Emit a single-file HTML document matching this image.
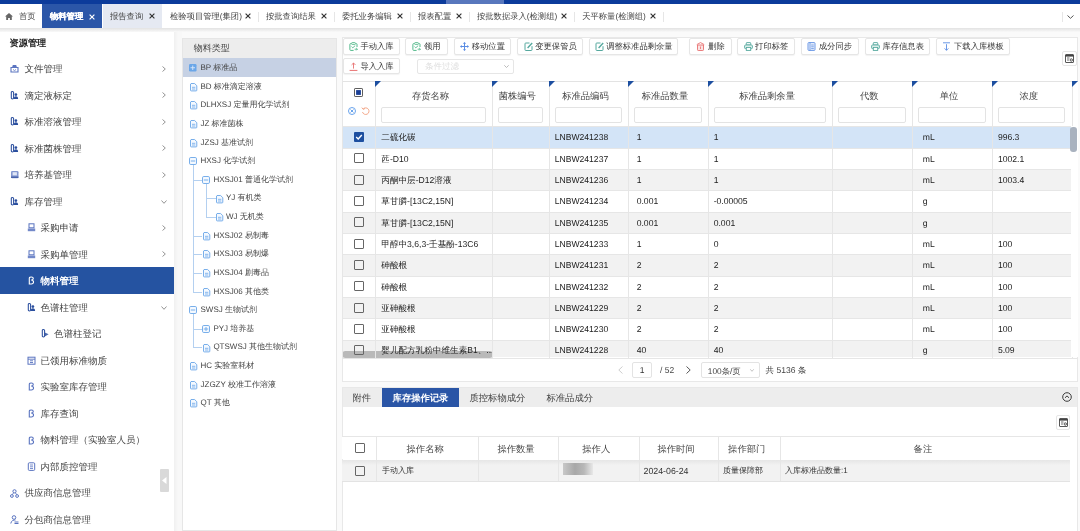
<!DOCTYPE html><html><head><meta charset="utf-8"><style>
*{box-sizing:border-box;margin:0;padding:0}
html,body{width:1080px;height:531px;overflow:hidden;background:#f9f9f9;font-family:"Liberation Sans", sans-serif;color:#333}
.a{position:absolute;white-space:nowrap;text-rendering:geometricPrecision}
svg{position:absolute;overflow:visible}
</style></head><body><div style="position:absolute;left:0;top:0;width:1080px;height:531px;overflow:hidden;background:#fafafa;filter:blur(0.3px)">

<div class="a" style="left:0px;top:0px;width:1080px;height:4px;background:#0c3b9b"></div>
<div class="a" style="left:446px;top:0px;width:58px;height:4px;background:#5877bd"></div>
<div class="a" style="left:0px;top:4px;width:1080px;height:24px;background:#fff"></div>
<div class="a" style="left:0px;top:28px;width:1080px;height:4px;background:linear-gradient(#e2e2e2,#f9f9f9)"></div>
<svg style="left:5px;top:13px" width="8" height="7" viewBox="0 0 8 7"><path d="M4 0 L8 3.6 H6.8 V7 H4.9 V5 H3.1 V7 H1.2 V3.6 H0 Z" fill="#666"/></svg>
<div class="a" style="left:19px;top:8.90px;height:14px;line-height:14px;font-size:8.3px;color:#444;font-weight:normal;">首页</div>
<div class="a" style="left:42px;top:4px;width:60px;height:24px;background:#2b56a8"></div>
<div class="a" style="left:50px;top:8.90px;height:14px;line-height:14px;font-size:8.3px;color:#fff;font-weight:bold;-webkit-text-stroke:0.2px #fff;">物料管理</div>
<svg style="left:89px;top:13.5px" width="6" height="6" viewBox="0 0 6 6"><path d="M0.6 0.6 L5.4 5.4 M5.4 0.6 L0.6 5.4" stroke="#fff" stroke-width="1.15"/></svg>
<div class="a" style="left:103px;top:4px;width:59px;height:24px;background:#e5e9f2"></div>
<div class="a" style="left:110px;top:8.90px;height:14px;line-height:14px;font-size:8.3px;color:#444;font-weight:normal;">报告查询</div>
<svg style="left:149px;top:13px" width="6" height="6" viewBox="0 0 6 6"><path d="M0.6 0.6 L5.4 5.4 M5.4 0.6 L0.6 5.4" stroke="#333" stroke-width="1.15"/></svg>
<div class="a" style="left:170px;top:8.90px;height:14px;line-height:14px;font-size:8.3px;color:#444;font-weight:normal;">检验项目管理(集团)</div>
<svg style="left:245px;top:13.3px" width="6" height="6" viewBox="0 0 6 6"><path d="M0.6 0.6 L5.4 5.4 M5.4 0.6 L0.6 5.4" stroke="#333" stroke-width="1.15"/></svg>
<div class="a" style="left:258px;top:12px;width:1px;height:10px;background:#e6e6e6"></div>
<div class="a" style="left:266px;top:8.90px;height:14px;line-height:14px;font-size:8.3px;color:#444;font-weight:normal;">按批查询结果</div>
<svg style="left:321px;top:13.3px" width="6" height="6" viewBox="0 0 6 6"><path d="M0.6 0.6 L5.4 5.4 M5.4 0.6 L0.6 5.4" stroke="#333" stroke-width="1.15"/></svg>
<div class="a" style="left:334px;top:12px;width:1px;height:10px;background:#e6e6e6"></div>
<div class="a" style="left:342px;top:8.90px;height:14px;line-height:14px;font-size:8.3px;color:#444;font-weight:normal;">委托业务编辑</div>
<svg style="left:397px;top:13.3px" width="6" height="6" viewBox="0 0 6 6"><path d="M0.6 0.6 L5.4 5.4 M5.4 0.6 L0.6 5.4" stroke="#333" stroke-width="1.15"/></svg>
<div class="a" style="left:410px;top:12px;width:1px;height:10px;background:#e6e6e6"></div>
<div class="a" style="left:418px;top:8.90px;height:14px;line-height:14px;font-size:8.3px;color:#444;font-weight:normal;">报表配置</div>
<svg style="left:456px;top:13.3px" width="6" height="6" viewBox="0 0 6 6"><path d="M0.6 0.6 L5.4 5.4 M5.4 0.6 L0.6 5.4" stroke="#333" stroke-width="1.15"/></svg>
<div class="a" style="left:469px;top:12px;width:1px;height:10px;background:#e6e6e6"></div>
<div class="a" style="left:477px;top:8.90px;height:14px;line-height:14px;font-size:8.3px;color:#444;font-weight:normal;">按批数据录入(检测组)</div>
<svg style="left:561.2px;top:13.3px" width="6" height="6" viewBox="0 0 6 6"><path d="M0.6 0.6 L5.4 5.4 M5.4 0.6 L0.6 5.4" stroke="#333" stroke-width="1.15"/></svg>
<div class="a" style="left:574.2px;top:12px;width:1px;height:10px;background:#e6e6e6"></div>
<div class="a" style="left:582.2px;top:8.90px;height:14px;line-height:14px;font-size:8.3px;color:#444;font-weight:normal;">天平称量(检测组)</div>
<svg style="left:650px;top:13.3px" width="6" height="6" viewBox="0 0 6 6"><path d="M0.6 0.6 L5.4 5.4 M5.4 0.6 L0.6 5.4" stroke="#333" stroke-width="1.15"/></svg>
<div class="a" style="left:663px;top:12px;width:1px;height:10px;background:#e6e6e6"></div>
<div class="a" style="left:1062px;top:12px;width:1px;height:10px;background:#e6e6e6"></div>
<svg style="left:1067px;top:15px" width="7" height="4" viewBox="0 0 7 4"><path d="M0.5 0.5 L3.5 3.3 L6.5 0.5" stroke="#555" fill="none" stroke-width="1"/></svg>
<div class="a" style="left:0px;top:32px;width:174.2px;height:499px;background:#fff"></div>
<div class="a" style="left:174.2px;top:32px;width:8px;height:499px;background:linear-gradient(90deg,#f0f0f0,#f8f8f8 50%)"></div>
<div class="a" style="left:9.5px;top:34.70px;height:16px;line-height:16px;font-size:9.2px;color:#222;font-weight:bold;">资源管理</div>
<svg style="left:10px;top:64.2px" width="9" height="9" viewBox="0 0 9 9"><path d="M1 3.5 H8 V8 H1 Z" fill="none" stroke="#5a74c0" stroke-width="1.1"/><path d="M2 3.5 L2.8 1 H6.2 L7 3.5" fill="#5a74c0"/><path d="M3 5.5 L4.5 6.5 L6 5.5" stroke="#5a74c0" stroke-width="0.8" fill="none"/></svg>
<div class="a" style="left:24.5px;top:62.00px;height:16px;line-height:16px;font-size:9.5px;color:#444;font-weight:normal;">文件管理</div>
<svg style="left:162px;top:65.7px" width="4" height="6" viewBox="0 0 4 6"><path d="M0.5 0.5 L3.3 3 L0.5 5.5" stroke="#888" fill="none" stroke-width="0.9"/></svg>
<svg style="left:10px;top:90.7px" width="9" height="9" viewBox="0 0 9 9"><rect x="1.3" y="0.4" width="2.3" height="7.5" rx="1.1" fill="none" stroke="#2a4e9e" stroke-width="1.05"/><circle cx="5.9" cy="3.6" r="1.35" fill="#2a4e9e"/><path d="M3.8 7.9 Q3.8 5.2 5.9 5.2 Q8.1 5.2 8.1 7.9Z" fill="#2a4e9e"/></svg>
<div class="a" style="left:24.5px;top:88.52px;height:16px;line-height:16px;font-size:9.5px;color:#444;font-weight:normal;">滴定液标定</div>
<svg style="left:162px;top:92.2px" width="4" height="6" viewBox="0 0 4 6"><path d="M0.5 0.5 L3.3 3 L0.5 5.5" stroke="#888" fill="none" stroke-width="0.9"/></svg>
<svg style="left:10px;top:117.2px" width="9" height="9" viewBox="0 0 9 9"><rect x="1.3" y="0.4" width="2.3" height="7.5" rx="1.1" fill="none" stroke="#2a4e9e" stroke-width="1.05"/><circle cx="5.9" cy="3.6" r="1.35" fill="#2a4e9e"/><path d="M3.8 7.9 Q3.8 5.2 5.9 5.2 Q8.1 5.2 8.1 7.9Z" fill="#2a4e9e"/></svg>
<div class="a" style="left:24.5px;top:115.04px;height:16px;line-height:16px;font-size:9.5px;color:#444;font-weight:normal;">标准溶液管理</div>
<svg style="left:162px;top:118.7px" width="4" height="6" viewBox="0 0 4 6"><path d="M0.5 0.5 L3.3 3 L0.5 5.5" stroke="#888" fill="none" stroke-width="0.9"/></svg>
<svg style="left:10px;top:143.8px" width="9" height="9" viewBox="0 0 9 9"><rect x="1.3" y="0.4" width="2.3" height="7.5" rx="1.1" fill="none" stroke="#2a4e9e" stroke-width="1.05"/><circle cx="5.9" cy="3.6" r="1.35" fill="#2a4e9e"/><path d="M3.8 7.9 Q3.8 5.2 5.9 5.2 Q8.1 5.2 8.1 7.9Z" fill="#2a4e9e"/></svg>
<div class="a" style="left:24.5px;top:141.56px;height:16px;line-height:16px;font-size:9.5px;color:#444;font-weight:normal;">标准菌株管理</div>
<svg style="left:162px;top:145.3px" width="4" height="6" viewBox="0 0 4 6"><path d="M0.5 0.5 L3.3 3 L0.5 5.5" stroke="#888" fill="none" stroke-width="0.9"/></svg>
<svg style="left:10px;top:170.3px" width="9" height="9" viewBox="0 0 9 9"><rect x="1" y="1" width="7.5" height="7.2" rx="1.2" fill="#5a74c0" opacity="0.75"/><rect x="2.6" y="2.2" width="4.3" height="3.2" fill="#dfe5f5"/><path d="M1 7.2 H8.5" stroke="#2f4a9a" stroke-width="1"/></svg>
<div class="a" style="left:24.5px;top:168.08px;height:16px;line-height:16px;font-size:9.5px;color:#444;font-weight:normal;">培养基管理</div>
<svg style="left:162px;top:171.8px" width="4" height="6" viewBox="0 0 4 6"><path d="M0.5 0.5 L3.3 3 L0.5 5.5" stroke="#888" fill="none" stroke-width="0.9"/></svg>
<svg style="left:10px;top:196.8px" width="9" height="9" viewBox="0 0 9 9"><rect x="1.3" y="0.4" width="2.3" height="7.5" rx="1.1" fill="none" stroke="#2a4e9e" stroke-width="1.05"/><circle cx="5.9" cy="3.6" r="1.35" fill="#2a4e9e"/><path d="M3.8 7.9 Q3.8 5.2 5.9 5.2 Q8.1 5.2 8.1 7.9Z" fill="#2a4e9e"/></svg>
<div class="a" style="left:24.5px;top:194.60px;height:16px;line-height:16px;font-size:9.5px;color:#444;font-weight:normal;">库存管理</div>
<svg style="left:161px;top:199.8px" width="6" height="4" viewBox="0 0 6 4"><path d="M0.5 0.5 L3 3.3 L5.5 0.5" stroke="#888" fill="none" stroke-width="0.9"/></svg>
<svg style="left:26.5px;top:223.3px" width="9" height="9" viewBox="0 0 9 9"><rect x="2" y="0.8" width="5" height="4" fill="none" stroke="#5a74c0" stroke-width="1"/><path d="M0.8 5.5 H8.2 V8.2 H0.8Z" fill="#5a74c0" opacity="0.85"/></svg>
<div class="a" style="left:40.5px;top:221.12px;height:16px;line-height:16px;font-size:9.5px;color:#444;font-weight:normal;">采购申请</div>
<svg style="left:162px;top:224.8px" width="4" height="6" viewBox="0 0 4 6"><path d="M0.5 0.5 L3.3 3 L0.5 5.5" stroke="#888" fill="none" stroke-width="0.9"/></svg>
<svg style="left:26.5px;top:249.8px" width="9" height="9" viewBox="0 0 9 9"><rect x="2" y="0.8" width="5" height="4" fill="none" stroke="#5a74c0" stroke-width="1"/><path d="M0.8 5.5 H8.2 V8.2 H0.8Z" fill="#5a74c0" opacity="0.85"/></svg>
<div class="a" style="left:40.5px;top:247.64px;height:16px;line-height:16px;font-size:9.5px;color:#444;font-weight:normal;">采购单管理</div>
<svg style="left:162px;top:251.3px" width="4" height="6" viewBox="0 0 4 6"><path d="M0.5 0.5 L3.3 3 L0.5 5.5" stroke="#888" fill="none" stroke-width="0.9"/></svg>
<div class="a" style="left:0px;top:267.2px;width:174.2px;height:26.7px;background:#2553a1"></div>
<svg style="left:26.5px;top:276.4px" width="9" height="9" viewBox="0 0 9 9"><path d="M2.3 8.5 V2.2 C2.3 0.5 6.3 0.5 6.3 2.4 C6.3 3.8 4.2 4 4.2 4 C7.3 4.3 7.3 8 4.3 8 H2.3" fill="none" stroke="#fff" stroke-width="1.1"/></svg>
<div class="a" style="left:40.5px;top:274.16px;height:16px;line-height:16px;font-size:9.5px;color:#fff;font-weight:bold;">物料管理</div>
<svg style="left:26.5px;top:302.9px" width="9" height="9" viewBox="0 0 9 9"><rect x="1.3" y="0.4" width="2.3" height="7.5" rx="1.1" fill="none" stroke="#2a4e9e" stroke-width="1.05"/><circle cx="5.9" cy="3.6" r="1.35" fill="#2a4e9e"/><path d="M3.8 7.9 Q3.8 5.2 5.9 5.2 Q8.1 5.2 8.1 7.9Z" fill="#2a4e9e"/></svg>
<div class="a" style="left:40.5px;top:300.68px;height:16px;line-height:16px;font-size:9.5px;color:#444;font-weight:normal;">色谱柱管理</div>
<svg style="left:161px;top:305.9px" width="6" height="4" viewBox="0 0 6 4"><path d="M0.5 0.5 L3 3.3 L5.5 0.5" stroke="#888" fill="none" stroke-width="0.9"/></svg>
<svg style="left:41px;top:329.4px" width="9" height="9" viewBox="0 0 9 9"><rect x="1.3" y="0.4" width="2.3" height="7.5" rx="1.1" fill="none" stroke="#2a4e9e" stroke-width="1.05"/><path d="M3.8 3.5 L7.6 5.2 L3.8 7.6Z" fill="#2a4e9e" opacity="0.85"/></svg>
<div class="a" style="left:54px;top:327.20px;height:16px;line-height:16px;font-size:9.5px;color:#444;font-weight:normal;">色谱柱登记</div>
<svg style="left:26.5px;top:355.9px" width="9" height="9" viewBox="0 0 9 9"><rect x="1" y="1.2" width="7" height="7" fill="none" stroke="#5a74c0" stroke-width="1"/><path d="M1 3.2 H8 M3 4.8 H6 M3 6.5 H6" stroke="#5a74c0" stroke-width="0.9"/></svg>
<div class="a" style="left:40.5px;top:353.72px;height:16px;line-height:16px;font-size:9.5px;color:#444;font-weight:normal;">已领用标准物质</div>
<svg style="left:26.5px;top:382.4px" width="9" height="9" viewBox="0 0 9 9"><path d="M2.3 8.5 V2.2 C2.3 0.5 6.3 0.5 6.3 2.4 C6.3 3.8 4.2 4 4.2 4 C7.3 4.3 7.3 8 4.3 8 H2.3" fill="none" stroke="#5a74c0" stroke-width="1.1"/></svg>
<div class="a" style="left:40.5px;top:380.24px;height:16px;line-height:16px;font-size:9.5px;color:#444;font-weight:normal;">实验室库存管理</div>
<svg style="left:26.5px;top:409.0px" width="9" height="9" viewBox="0 0 9 9"><path d="M2.3 8.5 V2.2 C2.3 0.5 6.3 0.5 6.3 2.4 C6.3 3.8 4.2 4 4.2 4 C7.3 4.3 7.3 8 4.3 8 H2.3" fill="none" stroke="#5a74c0" stroke-width="1.1"/></svg>
<div class="a" style="left:40.5px;top:406.76px;height:16px;line-height:16px;font-size:9.5px;color:#444;font-weight:normal;">库存查询</div>
<svg style="left:26.5px;top:435.5px" width="9" height="9" viewBox="0 0 9 9"><path d="M2.3 8.5 V2.2 C2.3 0.5 6.3 0.5 6.3 2.4 C6.3 3.8 4.2 4 4.2 4 C7.3 4.3 7.3 8 4.3 8 H2.3" fill="none" stroke="#5a74c0" stroke-width="1.1"/></svg>
<div class="a" style="left:40.5px;top:433.28px;height:16px;line-height:16px;font-size:9.5px;color:#444;font-weight:normal;">物料管理（实验室人员）</div>
<svg style="left:26.5px;top:462.0px" width="9" height="9" viewBox="0 0 9 9"><rect x="1.3" y="0.8" width="6.4" height="7.6" rx="1" fill="none" stroke="#5a74c0" stroke-width="1"/><path d="M3 3 H6 M3 4.8 H6 M3 6.5 H6" stroke="#5a74c0" stroke-width="0.8"/></svg>
<div class="a" style="left:40.5px;top:459.80px;height:16px;line-height:16px;font-size:9.5px;color:#444;font-weight:normal;">内部质控管理</div>
<svg style="left:10px;top:488.5px" width="9" height="9" viewBox="0 0 9 9"><circle cx="4.5" cy="2.3" r="1.6" fill="none" stroke="#5a74c0" stroke-width="1"/><circle cx="1.9" cy="7" r="1.4" fill="none" stroke="#5a74c0" stroke-width="1"/><circle cx="7.1" cy="7" r="1.4" fill="none" stroke="#5a74c0" stroke-width="1"/><path d="M3.6 3.7 L2.5 5.6 M5.4 3.7 L6.5 5.6" stroke="#5a74c0" stroke-width="0.9"/></svg>
<div class="a" style="left:24.5px;top:486.32px;height:16px;line-height:16px;font-size:9.5px;color:#444;font-weight:normal;">供应商信息管理</div>
<svg style="left:10px;top:515.0px" width="9" height="9" viewBox="0 0 9 9"><circle cx="4" cy="2.5" r="1.8" fill="none" stroke="#5a74c0" stroke-width="1"/><path d="M0.8 8.5 C1 5.5 4 4.8 5.5 5 M4.5 7 H8.5 M4.5 8.5 H8.5" fill="none" stroke="#5a74c0" stroke-width="1"/></svg>
<div class="a" style="left:24.5px;top:512.84px;height:16px;line-height:16px;font-size:9.5px;color:#444;font-weight:normal;">分包商信息管理</div>
<div class="a" style="left:159.7px;top:468.8px;width:9.3px;height:22.8px;background:#d9d9d9;border-radius:1px"></div>
<svg style="left:162px;top:476.5px" width="5" height="7" viewBox="0 0 5 7"><path d="M4.5 0 V7 L0 3.5Z" fill="#fff"/></svg>
<div class="a" style="left:182px;top:38px;width:155px;height:493px;background:#fff;border:1px solid #e6e6e6"></div>
<div class="a" style="left:183px;top:39px;width:153px;height:19px;background:#ededed"></div>
<div class="a" style="left:193.7px;top:40.00px;height:16px;line-height:16px;font-size:9px;color:#444;font-weight:normal;">物料类型</div>
<div class="a" style="left:183px;top:58px;width:153px;height:19px;background:#c6d1e4"></div>
<svg style="left:189px;top:64.1px" width="8" height="8" viewBox="0 0 8 8"><rect x="0" y="0" width="7.5" height="7.5" rx="1.2" fill="#6aa6e8"/><path d="M3.75 1.5 V6 M1.5 3.75 H6" stroke="#dce8f8" stroke-width="0.9"/></svg>
<div class="a" style="left:200.5px;top:62.10px;height:12px;line-height:12px;font-size:8px;color:#444;font-weight:normal;">BP 标准品</div>
<svg style="left:189.6px;top:82.8px" width="8" height="9" viewBox="0 0 8 9"><path d="M1 0.5 H4.6 L6.8 2.7 V7.2 Q6.8 7.9 6.1 7.9 H1.3 Q0.5 7.9 0.5 7.2 V1 Z" fill="#f4f9ff" stroke="#6aa6e8" stroke-width="0.9"/><path d="M2 4.3 H5.3 M2 6 H5.3" stroke="#6aa6e8" stroke-width="0.8"/></svg>
<div class="a" style="left:200.5px;top:80.72px;height:12px;line-height:12px;font-size:8px;color:#444;font-weight:normal;">BD 标准滴定溶液</div>
<svg style="left:189.6px;top:101.4px" width="8" height="9" viewBox="0 0 8 9"><path d="M1 0.5 H4.6 L6.8 2.7 V7.2 Q6.8 7.9 6.1 7.9 H1.3 Q0.5 7.9 0.5 7.2 V1 Z" fill="#f4f9ff" stroke="#6aa6e8" stroke-width="0.9"/><path d="M2 4.3 H5.3 M2 6 H5.3" stroke="#6aa6e8" stroke-width="0.8"/></svg>
<div class="a" style="left:200.5px;top:99.34px;height:12px;line-height:12px;font-size:8px;color:#444;font-weight:normal;">DLHXSJ 定量用化学试剂</div>
<svg style="left:189.6px;top:120.1px" width="8" height="9" viewBox="0 0 8 9"><path d="M1 0.5 H4.6 L6.8 2.7 V7.2 Q6.8 7.9 6.1 7.9 H1.3 Q0.5 7.9 0.5 7.2 V1 Z" fill="#f4f9ff" stroke="#6aa6e8" stroke-width="0.9"/><path d="M2 4.3 H5.3 M2 6 H5.3" stroke="#6aa6e8" stroke-width="0.8"/></svg>
<div class="a" style="left:200.5px;top:117.96px;height:12px;line-height:12px;font-size:8px;color:#444;font-weight:normal;">JZ 标准菌株</div>
<svg style="left:189.6px;top:138.7px" width="8" height="9" viewBox="0 0 8 9"><path d="M1 0.5 H4.6 L6.8 2.7 V7.2 Q6.8 7.9 6.1 7.9 H1.3 Q0.5 7.9 0.5 7.2 V1 Z" fill="#f4f9ff" stroke="#6aa6e8" stroke-width="0.9"/><path d="M2 4.3 H5.3 M2 6 H5.3" stroke="#6aa6e8" stroke-width="0.8"/></svg>
<div class="a" style="left:200.5px;top:136.58px;height:12px;line-height:12px;font-size:8px;color:#444;font-weight:normal;">JZSJ 基准试剂</div>
<svg style="left:189px;top:157.2px" width="8" height="8" viewBox="0 0 8 8"><rect x="0.5" y="0.5" width="7" height="7" rx="1.3" fill="#f4f9ff" stroke="#6aa6e8" stroke-width="0.9"/><path d="M1.8 4 H6.2" stroke="#6aa6e8" stroke-width="0.9"/></svg>
<div class="a" style="left:200.5px;top:155.20px;height:12px;line-height:12px;font-size:8px;color:#444;font-weight:normal;">HXSJ 化学试剂</div>
<svg style="left:202.3px;top:175.8px" width="8" height="8" viewBox="0 0 8 8"><rect x="0.5" y="0.5" width="7" height="7" rx="1.3" fill="#f4f9ff" stroke="#6aa6e8" stroke-width="0.9"/><path d="M1.8 4 H6.2" stroke="#6aa6e8" stroke-width="0.9"/></svg>
<div class="a" style="left:213.4px;top:173.82px;height:12px;line-height:12px;font-size:8px;color:#444;font-weight:normal;">HXSJ01 普通化学试剂</div>
<svg style="left:216.4px;top:194.5px" width="8" height="9" viewBox="0 0 8 9"><path d="M1 0.5 H4.6 L6.8 2.7 V7.2 Q6.8 7.9 6.1 7.9 H1.3 Q0.5 7.9 0.5 7.2 V1 Z" fill="#f4f9ff" stroke="#6aa6e8" stroke-width="0.9"/><path d="M2 4.3 H5.3 M2 6 H5.3" stroke="#6aa6e8" stroke-width="0.8"/></svg>
<div class="a" style="left:226px;top:192.44px;height:12px;line-height:12px;font-size:8px;color:#444;font-weight:normal;">YJ 有机类</div>
<svg style="left:216.4px;top:213.2px" width="8" height="9" viewBox="0 0 8 9"><path d="M1 0.5 H4.6 L6.8 2.7 V7.2 Q6.8 7.9 6.1 7.9 H1.3 Q0.5 7.9 0.5 7.2 V1 Z" fill="#f4f9ff" stroke="#6aa6e8" stroke-width="0.9"/><path d="M2 4.3 H5.3 M2 6 H5.3" stroke="#6aa6e8" stroke-width="0.8"/></svg>
<div class="a" style="left:226px;top:211.06px;height:12px;line-height:12px;font-size:8px;color:#444;font-weight:normal;">WJ 无机类</div>
<svg style="left:202.9px;top:231.8px" width="8" height="9" viewBox="0 0 8 9"><path d="M1 0.5 H4.6 L6.8 2.7 V7.2 Q6.8 7.9 6.1 7.9 H1.3 Q0.5 7.9 0.5 7.2 V1 Z" fill="#f4f9ff" stroke="#6aa6e8" stroke-width="0.9"/><path d="M2 4.3 H5.3 M2 6 H5.3" stroke="#6aa6e8" stroke-width="0.8"/></svg>
<div class="a" style="left:213.4px;top:229.68px;height:12px;line-height:12px;font-size:8px;color:#444;font-weight:normal;">HXSJ02 易制毒</div>
<svg style="left:202.9px;top:250.4px" width="8" height="9" viewBox="0 0 8 9"><path d="M1 0.5 H4.6 L6.8 2.7 V7.2 Q6.8 7.9 6.1 7.9 H1.3 Q0.5 7.9 0.5 7.2 V1 Z" fill="#f4f9ff" stroke="#6aa6e8" stroke-width="0.9"/><path d="M2 4.3 H5.3 M2 6 H5.3" stroke="#6aa6e8" stroke-width="0.8"/></svg>
<div class="a" style="left:213.4px;top:248.30px;height:12px;line-height:12px;font-size:8px;color:#444;font-weight:normal;">HXSJ03 易制爆</div>
<svg style="left:202.9px;top:269.0px" width="8" height="9" viewBox="0 0 8 9"><path d="M1 0.5 H4.6 L6.8 2.7 V7.2 Q6.8 7.9 6.1 7.9 H1.3 Q0.5 7.9 0.5 7.2 V1 Z" fill="#f4f9ff" stroke="#6aa6e8" stroke-width="0.9"/><path d="M2 4.3 H5.3 M2 6 H5.3" stroke="#6aa6e8" stroke-width="0.8"/></svg>
<div class="a" style="left:213.4px;top:266.92px;height:12px;line-height:12px;font-size:8px;color:#444;font-weight:normal;">HXSJ04 剧毒品</div>
<svg style="left:202.9px;top:287.6px" width="8" height="9" viewBox="0 0 8 9"><path d="M1 0.5 H4.6 L6.8 2.7 V7.2 Q6.8 7.9 6.1 7.9 H1.3 Q0.5 7.9 0.5 7.2 V1 Z" fill="#f4f9ff" stroke="#6aa6e8" stroke-width="0.9"/><path d="M2 4.3 H5.3 M2 6 H5.3" stroke="#6aa6e8" stroke-width="0.8"/></svg>
<div class="a" style="left:213.4px;top:285.54px;height:12px;line-height:12px;font-size:8px;color:#444;font-weight:normal;">HXSJ06 其他类</div>
<svg style="left:189px;top:306.2px" width="8" height="8" viewBox="0 0 8 8"><rect x="0.5" y="0.5" width="7" height="7" rx="1.3" fill="#f4f9ff" stroke="#6aa6e8" stroke-width="0.9"/><path d="M1.8 4 H6.2" stroke="#6aa6e8" stroke-width="0.9"/></svg>
<div class="a" style="left:200.5px;top:304.16px;height:12px;line-height:12px;font-size:8px;color:#444;font-weight:normal;">SWSJ 生物试剂</div>
<svg style="left:202.3px;top:324.8px" width="8" height="8" viewBox="0 0 8 8"><rect x="0.5" y="0.5" width="7" height="7" rx="1.3" fill="#f4f9ff" stroke="#6aa6e8" stroke-width="0.9"/><path d="M1.8 4 H6.2" stroke="#6aa6e8" stroke-width="0.9"/><path d="M4 2 V6" stroke="#6aa6e8" stroke-width="0.9"/></svg>
<div class="a" style="left:213.4px;top:322.78px;height:12px;line-height:12px;font-size:8px;color:#444;font-weight:normal;">PYJ 培养基</div>
<svg style="left:202.9px;top:343.5px" width="8" height="9" viewBox="0 0 8 9"><path d="M1 0.5 H4.6 L6.8 2.7 V7.2 Q6.8 7.9 6.1 7.9 H1.3 Q0.5 7.9 0.5 7.2 V1 Z" fill="#f4f9ff" stroke="#6aa6e8" stroke-width="0.9"/><path d="M2 4.3 H5.3 M2 6 H5.3" stroke="#6aa6e8" stroke-width="0.8"/></svg>
<div class="a" style="left:213.4px;top:341.40px;height:12px;line-height:12px;font-size:8px;color:#444;font-weight:normal;">QTSWSJ 其他生物试剂</div>
<svg style="left:189.6px;top:362.1px" width="8" height="9" viewBox="0 0 8 9"><path d="M1 0.5 H4.6 L6.8 2.7 V7.2 Q6.8 7.9 6.1 7.9 H1.3 Q0.5 7.9 0.5 7.2 V1 Z" fill="#f4f9ff" stroke="#6aa6e8" stroke-width="0.9"/><path d="M2 4.3 H5.3 M2 6 H5.3" stroke="#6aa6e8" stroke-width="0.8"/></svg>
<div class="a" style="left:200.5px;top:360.02px;height:12px;line-height:12px;font-size:8px;color:#444;font-weight:normal;">HC 实验室耗材</div>
<svg style="left:189.6px;top:380.7px" width="8" height="9" viewBox="0 0 8 9"><path d="M1 0.5 H4.6 L6.8 2.7 V7.2 Q6.8 7.9 6.1 7.9 H1.3 Q0.5 7.9 0.5 7.2 V1 Z" fill="#f4f9ff" stroke="#6aa6e8" stroke-width="0.9"/><path d="M2 4.3 H5.3 M2 6 H5.3" stroke="#6aa6e8" stroke-width="0.8"/></svg>
<div class="a" style="left:200.5px;top:378.64px;height:12px;line-height:12px;font-size:8px;color:#444;font-weight:normal;">JZGZY 校准工作溶液</div>
<svg style="left:189.6px;top:399.4px" width="8" height="9" viewBox="0 0 8 9"><path d="M1 0.5 H4.6 L6.8 2.7 V7.2 Q6.8 7.9 6.1 7.9 H1.3 Q0.5 7.9 0.5 7.2 V1 Z" fill="#f4f9ff" stroke="#6aa6e8" stroke-width="0.9"/><path d="M2 4.3 H5.3 M2 6 H5.3" stroke="#6aa6e8" stroke-width="0.8"/></svg>
<div class="a" style="left:200.5px;top:397.26px;height:12px;line-height:12px;font-size:8px;color:#444;font-weight:normal;">QT 其他</div>
<div class="a" style="left:192.6px;top:165.20000000000002px;width:0.9px;height:126.34px;background:#b4d0f0"></div>
<div class="a" style="left:193px;top:179.82px;width:9px;height:0.9px;background:#b4d0f0"></div>
<div class="a" style="left:193px;top:235.68px;width:9px;height:0.9px;background:#b4d0f0"></div>
<div class="a" style="left:193px;top:254.3px;width:9px;height:0.9px;background:#b4d0f0"></div>
<div class="a" style="left:193px;top:272.92px;width:9px;height:0.9px;background:#b4d0f0"></div>
<div class="a" style="left:193px;top:291.54px;width:9px;height:0.9px;background:#b4d0f0"></div>
<div class="a" style="left:206px;top:183.82px;width:0.9px;height:33.24000000000001px;background:#b4d0f0"></div>
<div class="a" style="left:206px;top:198.44px;width:9.5px;height:0.9px;background:#b4d0f0"></div>
<div class="a" style="left:206px;top:217.06px;width:9.5px;height:0.9px;background:#b4d0f0"></div>
<div class="a" style="left:192.6px;top:314.16px;width:0.9px;height:33.24000000000001px;background:#b4d0f0"></div>
<div class="a" style="left:193px;top:328.78000000000003px;width:9px;height:0.9px;background:#b4d0f0"></div>
<div class="a" style="left:193px;top:347.40000000000003px;width:9px;height:0.9px;background:#b4d0f0"></div>
<div class="a" style="left:342px;top:37px;width:736px;height:345px;background:#fff;border:1px solid #e8e8e8"></div>
<div class="a" style="left:342.5px;top:37.5px;width:57.5px;height:17.5px;background:#fff;border:1px solid #e6e6e6;border-radius:2px;box-shadow:0 1px 1px rgba(0,0,0,0.05)"></div>
<div class="a" style="left:342.5px;top:37.5px;width:57.5px;height:17.5px;display:flex;justify-content:center;align-items:center;font-size:8.3px;color:#333;padding-top:1.4px"><svg style="position:relative;margin-right:2.6px;top:-0.6px" width="9" height="9" viewBox="0 0 9 9"><path d="M2.2 1.6 H1.6 Q0.9 1.6 0.9 2.3 V7.6 Q0.9 8.4 1.6 8.4 H4.6 M6.8 1.6 H7.3 Q8 1.6 8 2.3 V5" fill="none" stroke="#52b98a" stroke-width="1"/><rect x="2.6" y="0.6" width="3.8" height="1.8" rx="0.6" fill="none" stroke="#52b98a" stroke-width="0.9"/><path d="M2.5 4.6 L3.8 5.8 L6.2 3.6" fill="none" stroke="#52b98a" stroke-width="0.9"/><path d="M5.6 7.2 H8.4 M7.2 6 L8.4 7.2 L7.2 8.4" fill="none" stroke="#52b98a" stroke-width="0.9"/></svg><span>手动入库</span></div>
<div class="a" style="left:405.4px;top:37.5px;width:42.30000000000001px;height:17.5px;background:#fff;border:1px solid #e6e6e6;border-radius:2px;box-shadow:0 1px 1px rgba(0,0,0,0.05)"></div>
<div class="a" style="left:405.4px;top:37.5px;width:42.30000000000001px;height:17.5px;display:flex;justify-content:center;align-items:center;font-size:8.3px;color:#333;padding-top:1.4px"><svg style="position:relative;margin-right:2.6px;top:-0.6px" width="9" height="9" viewBox="0 0 9 9"><path d="M2.2 1.6 H1.6 Q0.9 1.6 0.9 2.3 V7.6 Q0.9 8.4 1.6 8.4 H4.6 M6.8 1.6 H7.3 Q8 1.6 8 2.3 V5" fill="none" stroke="#52b98a" stroke-width="1"/><rect x="2.6" y="0.6" width="3.8" height="1.8" rx="0.6" fill="none" stroke="#52b98a" stroke-width="0.9"/><path d="M2.5 4.6 L3.8 5.8 L6.2 3.6" fill="none" stroke="#52b98a" stroke-width="0.9"/><path d="M5.6 7.2 H8.4 M7.2 6 L8.4 7.2 L7.2 8.4" fill="none" stroke="#52b98a" stroke-width="0.9"/></svg><span>领用</span></div>
<div class="a" style="left:453.6px;top:37.5px;width:57.89999999999998px;height:17.5px;background:#fff;border:1px solid #e6e6e6;border-radius:2px;box-shadow:0 1px 1px rgba(0,0,0,0.05)"></div>
<div class="a" style="left:453.6px;top:37.5px;width:57.89999999999998px;height:17.5px;display:flex;justify-content:center;align-items:center;font-size:8.3px;color:#333;padding-top:1.4px"><svg style="position:relative;margin-right:2.6px;top:-0.6px" width="9" height="9" viewBox="0 0 9 9"><path d="M4.5 0.8 V8.2 M0.8 4.5 H8.2" stroke="#5b8de3" stroke-width="1"/><path d="M4.5 0 L2.9 1.8 H6.1Z M4.5 9 L2.9 7.2 H6.1Z M0 4.5 L1.8 2.9 V6.1Z M9 4.5 L7.2 2.9 V6.1Z" fill="#5b8de3"/></svg><span>移动位置</span></div>
<div class="a" style="left:517.4px;top:37.5px;width:65.60000000000002px;height:17.5px;background:#fff;border:1px solid #e6e6e6;border-radius:2px;box-shadow:0 1px 1px rgba(0,0,0,0.05)"></div>
<div class="a" style="left:517.4px;top:37.5px;width:65.60000000000002px;height:17.5px;display:flex;justify-content:center;align-items:center;font-size:8.3px;color:#333;padding-top:1.4px"><svg style="position:relative;margin-right:2.6px;top:-0.6px" width="9" height="9" viewBox="0 0 9 9"><path d="M5.5 1 H1.8 Q1 1 1 1.8 V7.7 Q1 8.5 1.8 8.5 H7.2 Q8 8.5 8 7.7 V4.2" fill="none" stroke="#55a89e" stroke-width="1"/><path d="M3.6 5.9 L8.2 1.1" stroke="#55a89e" stroke-width="1.4"/></svg><span>变更保管员</span></div>
<div class="a" style="left:588.7px;top:37.5px;width:89.79999999999995px;height:17.5px;background:#fff;border:1px solid #e6e6e6;border-radius:2px;box-shadow:0 1px 1px rgba(0,0,0,0.05)"></div>
<div class="a" style="left:588.7px;top:37.5px;width:89.79999999999995px;height:17.5px;display:flex;justify-content:center;align-items:center;font-size:8.3px;color:#333;padding-top:1.4px"><svg style="position:relative;margin-right:2.6px;top:-0.6px" width="9" height="9" viewBox="0 0 9 9"><path d="M5.5 1 H1.8 Q1 1 1 1.8 V7.7 Q1 8.5 1.8 8.5 H7.2 Q8 8.5 8 7.7 V4.2" fill="none" stroke="#55a89e" stroke-width="1"/><path d="M3.6 5.9 L8.2 1.1" stroke="#55a89e" stroke-width="1.4"/></svg><span>调整标准品剩余量</span></div>
<div class="a" style="left:689.4px;top:37.5px;width:42.39999999999998px;height:17.5px;background:#fff;border:1px solid #e6e6e6;border-radius:2px;box-shadow:0 1px 1px rgba(0,0,0,0.05)"></div>
<div class="a" style="left:689.4px;top:37.5px;width:42.39999999999998px;height:17.5px;display:flex;justify-content:center;align-items:center;font-size:8.3px;color:#333;padding-top:1.4px"><svg style="position:relative;margin-right:2.6px;top:-0.6px" width="9" height="9" viewBox="0 0 9 9"><path d="M1.5 3 H7.5 V7.8 Q7.5 8.5 6.8 8.5 H2.2 Q1.5 8.5 1.5 7.8 Z" fill="#fbe3e3" stroke="#e87070" stroke-width="0.9"/><path d="M0.8 2.6 L4.5 0.6 L8.2 2.6" fill="none" stroke="#e87070" stroke-width="0.9"/><path d="M4.5 4.5 V7" stroke="#e87070" stroke-width="0.8"/></svg><span>删除</span></div>
<div class="a" style="left:737px;top:37.5px;width:57.799999999999955px;height:17.5px;background:#fff;border:1px solid #e6e6e6;border-radius:2px;box-shadow:0 1px 1px rgba(0,0,0,0.05)"></div>
<div class="a" style="left:737px;top:37.5px;width:57.799999999999955px;height:17.5px;display:flex;justify-content:center;align-items:center;font-size:8.3px;color:#333;padding-top:1.4px"><svg style="position:relative;margin-right:2.6px;top:-0.6px" width="9" height="9" viewBox="0 0 9 9"><rect x="2.3" y="0.6" width="4.4" height="2.4" rx="0.5" fill="none" stroke="#55a89e" stroke-width="0.9"/><path d="M2 6.6 H1.4 Q0.6 6.6 0.6 5.8 V4 Q0.6 3 1.6 3 H7.4 Q8.4 3 8.4 4 V5.8 Q8.4 6.6 7.6 6.6 H7" fill="#e3f2ef" stroke="#55a89e" stroke-width="0.9"/><rect x="2.3" y="5.4" width="4.4" height="3" fill="#fff" stroke="#55a89e" stroke-width="0.9"/></svg><span>打印标签</span></div>
<div class="a" style="left:800.6px;top:37.5px;width:58.0px;height:17.5px;background:#fff;border:1px solid #e6e6e6;border-radius:2px;box-shadow:0 1px 1px rgba(0,0,0,0.05)"></div>
<div class="a" style="left:800.6px;top:37.5px;width:58.0px;height:17.5px;display:flex;justify-content:center;align-items:center;font-size:8.3px;color:#333;padding-top:1.4px"><svg style="position:relative;margin-right:2.6px;top:-0.6px" width="9" height="9" viewBox="0 0 9 9"><rect x="1" y="0.6" width="7" height="7.8" rx="0.8" fill="#eef3fc" stroke="#5b8de3" stroke-width="0.9"/><path d="M3 0.6 V8.4 M4.2 3 H6.8 M4.2 4.8 H6.8 M4.2 6.6 H6.8" stroke="#5b8de3" stroke-width="0.8"/></svg><span>成分同步</span></div>
<div class="a" style="left:864.5px;top:37.5px;width:65.79999999999995px;height:17.5px;background:#fff;border:1px solid #e6e6e6;border-radius:2px;box-shadow:0 1px 1px rgba(0,0,0,0.05)"></div>
<div class="a" style="left:864.5px;top:37.5px;width:65.79999999999995px;height:17.5px;display:flex;justify-content:center;align-items:center;font-size:8.3px;color:#333;padding-top:1.4px"><svg style="position:relative;margin-right:2.6px;top:-0.6px" width="9" height="9" viewBox="0 0 9 9"><rect x="2.3" y="0.6" width="4.4" height="2.4" rx="0.5" fill="none" stroke="#55a89e" stroke-width="0.9"/><path d="M2 6.6 H1.4 Q0.6 6.6 0.6 5.8 V4 Q0.6 3 1.6 3 H7.4 Q8.4 3 8.4 4 V5.8 Q8.4 6.6 7.6 6.6 H7" fill="#e3f2ef" stroke="#55a89e" stroke-width="0.9"/><rect x="2.3" y="5.4" width="4.4" height="3" fill="#fff" stroke="#55a89e" stroke-width="0.9"/></svg><span>库存信息表</span></div>
<div class="a" style="left:936px;top:37.5px;width:74.29999999999995px;height:17.5px;background:#fff;border:1px solid #e6e6e6;border-radius:2px;box-shadow:0 1px 1px rgba(0,0,0,0.05)"></div>
<div class="a" style="left:936px;top:37.5px;width:74.29999999999995px;height:17.5px;display:flex;justify-content:center;align-items:center;font-size:8.3px;color:#333;padding-top:1.4px"><svg style="position:relative;margin-right:2.6px;top:-0.6px" width="9" height="9" viewBox="0 0 9 9"><path d="M1 0.8 H8 M4.5 2.2 V8.3 M2.6 6.4 L4.5 8.3 L6.4 6.4" fill="none" stroke="#5b8de3" stroke-width="0.9"/></svg><span>下载入库模板</span></div>
<div class="a" style="left:342.5px;top:58px;width:57.5px;height:16px;background:#fff;border:1px solid #e6e6e6;border-radius:2px;box-shadow:0 1px 1px rgba(0,0,0,0.05)"></div>
<div class="a" style="left:342.5px;top:58px;width:57.5px;height:16px;display:flex;justify-content:center;align-items:center;font-size:8.3px;color:#333;padding-top:1.4px"><svg style="position:relative;margin-right:2.6px;top:-0.6px" width="9" height="9" viewBox="0 0 9 9"><path d="M0.6 8.4 H8.4" stroke="#e87070" stroke-width="1"/><path d="M4.5 6.6 V1 M2.6 2.9 L4.5 1 L6.4 2.9" fill="none" stroke="#e87070" stroke-width="0.9"/></svg><span>导入入库</span></div>
<div class="a" style="left:416.5px;top:58.5px;width:97.5px;height:15px;background:#fff;border:1px solid #e6e6e6;border-radius:2px"></div>
<div class="a" style="left:425px;top:60.30px;height:12px;line-height:12px;font-size:8.5px;color:#dedede;font-weight:normal;">条件过滤</div>
<svg style="left:504px;top:65px" width="5" height="3" viewBox="0 0 5 3"><path d="M0.3 0.3 L2.5 2.5 L4.7 0.3" stroke="#aaa" fill="none" stroke-width="0.8"/></svg>
<div class="a" style="left:1061.5px;top:50.8px;width:15.5px;height:14.8px;background:#fff;border:1px solid #e6e6e6;border-radius:2px"></div>
<svg style="left:1064.8px;top:53.7px" width="9" height="9" viewBox="0 0 9 9"><rect x="0.5" y="0.5" width="8" height="8" rx="0.5" fill="none" stroke="#444" stroke-width="0.9"/><path d="M0.5 1.8 H8.5" stroke="#444" stroke-width="1.6"/><path d="M2 4 H4.5 M2 6 H4" stroke="#444" stroke-width="0.8"/><circle cx="6.3" cy="6" r="1.2" fill="none" stroke="#444" stroke-width="0.9"/></svg>
<div class="a" style="left:342px;top:81px;width:736px;height:45.3px;background:#fff;border-top:1px solid #e3e3e3"></div>
<div class="a" style="left:342px;top:126.3px;width:729px;height:21.33px;background:#d3e4f7;border-top:1px solid #e6e6e6"></div>
<div class="a" style="left:342px;top:147.63px;width:729px;height:21.33px;background:#fff;border-top:1px solid #e6e6e6"></div>
<div class="a" style="left:342px;top:168.95999999999998px;width:729px;height:21.33px;background:#f2f2f2;border-top:1px solid #e6e6e6"></div>
<div class="a" style="left:342px;top:190.29px;width:729px;height:21.33px;background:#fff;border-top:1px solid #e6e6e6"></div>
<div class="a" style="left:342px;top:211.62px;width:729px;height:21.33px;background:#f2f2f2;border-top:1px solid #e6e6e6"></div>
<div class="a" style="left:342px;top:232.95px;width:729px;height:21.33px;background:#fff;border-top:1px solid #e6e6e6"></div>
<div class="a" style="left:342px;top:254.27999999999997px;width:729px;height:21.33px;background:#f2f2f2;border-top:1px solid #e6e6e6"></div>
<div class="a" style="left:342px;top:275.61px;width:729px;height:21.33px;background:#fff;border-top:1px solid #e6e6e6"></div>
<div class="a" style="left:342px;top:296.94px;width:729px;height:21.33px;background:#f2f2f2;border-top:1px solid #e6e6e6"></div>
<div class="a" style="left:342px;top:318.27px;width:729px;height:21.33px;background:#fff;border-top:1px solid #e6e6e6"></div>
<div class="a" style="left:342px;top:339.59999999999997px;width:729px;height:17.900000000000034px;background:#f2f2f2;border-top:1px solid #e6e6e6"></div>
<div class="a" style="left:342px;top:350.5px;width:151px;height:7.2px;background:#b3b3b3;border-radius:3.6px;opacity:0.9"></div>
<svg style="left:354px;top:132.0px" width="10" height="10" viewBox="0 0 10 10"><rect width="10" height="10" rx="1" fill="#1d4fa0"/><path d="M2.2 5 L4.2 7 L7.8 3" stroke="#fff" stroke-width="1.4" fill="none"/></svg>
<div class="a" style="left:381.3px;top:131.47px;height:12px;line-height:12px;font-size:8.6px;color:#222;font-weight:normal;">二硫化碳</div>
<div class="a" style="left:554.7px;top:131.47px;height:12px;line-height:12px;font-size:8.6px;color:#222;font-weight:normal;">LNBW241238</div>
<div class="a" style="left:636.7px;top:131.47px;height:12px;line-height:12px;font-size:8.6px;color:#222;font-weight:normal;">1</div>
<div class="a" style="left:713.7px;top:131.47px;height:12px;line-height:12px;font-size:8.6px;color:#222;font-weight:normal;">1</div>
<div class="a" style="left:922.8px;top:131.47px;height:12px;line-height:12px;font-size:8.6px;color:#222;font-weight:normal;">mL</div>
<div class="a" style="left:997.9px;top:131.47px;height:12px;line-height:12px;font-size:8.6px;color:#222;font-weight:normal;">996.3</div>
<div class="a" style="left:354px;top:153.295px;width:10px;height:10px;background:transparent;border:1px solid #666;border-radius:1px"></div>
<div class="a" style="left:381.3px;top:152.79px;height:12px;line-height:12px;font-size:8.6px;color:#222;font-weight:normal;">苉-D10</div>
<div class="a" style="left:554.7px;top:152.79px;height:12px;line-height:12px;font-size:8.6px;color:#222;font-weight:normal;">LNBW241237</div>
<div class="a" style="left:636.7px;top:152.79px;height:12px;line-height:12px;font-size:8.6px;color:#222;font-weight:normal;">1</div>
<div class="a" style="left:713.7px;top:152.79px;height:12px;line-height:12px;font-size:8.6px;color:#222;font-weight:normal;">1</div>
<div class="a" style="left:922.8px;top:152.79px;height:12px;line-height:12px;font-size:8.6px;color:#222;font-weight:normal;">mL</div>
<div class="a" style="left:997.9px;top:152.79px;height:12px;line-height:12px;font-size:8.6px;color:#222;font-weight:normal;">1002.1</div>
<div class="a" style="left:354px;top:174.62499999999997px;width:10px;height:10px;background:transparent;border:1px solid #666;border-radius:1px"></div>
<div class="a" style="left:381.3px;top:174.12px;height:12px;line-height:12px;font-size:8.6px;color:#222;font-weight:normal;">丙酮中层-D12溶液</div>
<div class="a" style="left:554.7px;top:174.12px;height:12px;line-height:12px;font-size:8.6px;color:#222;font-weight:normal;">LNBW241236</div>
<div class="a" style="left:636.7px;top:174.12px;height:12px;line-height:12px;font-size:8.6px;color:#222;font-weight:normal;">1</div>
<div class="a" style="left:713.7px;top:174.12px;height:12px;line-height:12px;font-size:8.6px;color:#222;font-weight:normal;">1</div>
<div class="a" style="left:922.8px;top:174.12px;height:12px;line-height:12px;font-size:8.6px;color:#222;font-weight:normal;">mL</div>
<div class="a" style="left:997.9px;top:174.12px;height:12px;line-height:12px;font-size:8.6px;color:#222;font-weight:normal;">1003.4</div>
<div class="a" style="left:354px;top:195.95499999999998px;width:10px;height:10px;background:transparent;border:1px solid #666;border-radius:1px"></div>
<div class="a" style="left:381.3px;top:195.45px;height:12px;line-height:12px;font-size:8.6px;color:#222;font-weight:normal;">草甘膦-[13C2,15N]</div>
<div class="a" style="left:554.7px;top:195.45px;height:12px;line-height:12px;font-size:8.6px;color:#222;font-weight:normal;">LNBW241234</div>
<div class="a" style="left:636.7px;top:195.45px;height:12px;line-height:12px;font-size:8.6px;color:#222;font-weight:normal;">0.001</div>
<div class="a" style="left:713.7px;top:195.45px;height:12px;line-height:12px;font-size:8.6px;color:#222;font-weight:normal;">-0.00005</div>
<div class="a" style="left:922.8px;top:195.45px;height:12px;line-height:12px;font-size:8.6px;color:#222;font-weight:normal;">g</div>
<div class="a" style="left:354px;top:217.285px;width:10px;height:10px;background:transparent;border:1px solid #666;border-radius:1px"></div>
<div class="a" style="left:381.3px;top:216.78px;height:12px;line-height:12px;font-size:8.6px;color:#222;font-weight:normal;">草甘膦-[13C2,15N]</div>
<div class="a" style="left:554.7px;top:216.78px;height:12px;line-height:12px;font-size:8.6px;color:#222;font-weight:normal;">LNBW241235</div>
<div class="a" style="left:636.7px;top:216.78px;height:12px;line-height:12px;font-size:8.6px;color:#222;font-weight:normal;">0.001</div>
<div class="a" style="left:713.7px;top:216.78px;height:12px;line-height:12px;font-size:8.6px;color:#222;font-weight:normal;">0.001</div>
<div class="a" style="left:922.8px;top:216.78px;height:12px;line-height:12px;font-size:8.6px;color:#222;font-weight:normal;">g</div>
<div class="a" style="left:354px;top:238.61499999999998px;width:10px;height:10px;background:transparent;border:1px solid #666;border-radius:1px"></div>
<div class="a" style="left:381.3px;top:238.11px;height:12px;line-height:12px;font-size:8.6px;color:#222;font-weight:normal;">甲醇中3,6,3-壬基酚-13C6</div>
<div class="a" style="left:554.7px;top:238.11px;height:12px;line-height:12px;font-size:8.6px;color:#222;font-weight:normal;">LNBW241233</div>
<div class="a" style="left:636.7px;top:238.11px;height:12px;line-height:12px;font-size:8.6px;color:#222;font-weight:normal;">1</div>
<div class="a" style="left:713.7px;top:238.11px;height:12px;line-height:12px;font-size:8.6px;color:#222;font-weight:normal;">0</div>
<div class="a" style="left:922.8px;top:238.11px;height:12px;line-height:12px;font-size:8.6px;color:#222;font-weight:normal;">mL</div>
<div class="a" style="left:997.9px;top:238.11px;height:12px;line-height:12px;font-size:8.6px;color:#222;font-weight:normal;">100</div>
<div class="a" style="left:354px;top:259.945px;width:10px;height:10px;background:transparent;border:1px solid #666;border-radius:1px"></div>
<div class="a" style="left:381.3px;top:259.44px;height:12px;line-height:12px;font-size:8.6px;color:#222;font-weight:normal;">砷酸根</div>
<div class="a" style="left:554.7px;top:259.44px;height:12px;line-height:12px;font-size:8.6px;color:#222;font-weight:normal;">LNBW241231</div>
<div class="a" style="left:636.7px;top:259.44px;height:12px;line-height:12px;font-size:8.6px;color:#222;font-weight:normal;">2</div>
<div class="a" style="left:713.7px;top:259.44px;height:12px;line-height:12px;font-size:8.6px;color:#222;font-weight:normal;">2</div>
<div class="a" style="left:922.8px;top:259.44px;height:12px;line-height:12px;font-size:8.6px;color:#222;font-weight:normal;">mL</div>
<div class="a" style="left:997.9px;top:259.44px;height:12px;line-height:12px;font-size:8.6px;color:#222;font-weight:normal;">100</div>
<div class="a" style="left:354px;top:281.27500000000003px;width:10px;height:10px;background:transparent;border:1px solid #666;border-radius:1px"></div>
<div class="a" style="left:381.3px;top:280.78px;height:12px;line-height:12px;font-size:8.6px;color:#222;font-weight:normal;">砷酸根</div>
<div class="a" style="left:554.7px;top:280.78px;height:12px;line-height:12px;font-size:8.6px;color:#222;font-weight:normal;">LNBW241232</div>
<div class="a" style="left:636.7px;top:280.78px;height:12px;line-height:12px;font-size:8.6px;color:#222;font-weight:normal;">2</div>
<div class="a" style="left:713.7px;top:280.78px;height:12px;line-height:12px;font-size:8.6px;color:#222;font-weight:normal;">2</div>
<div class="a" style="left:922.8px;top:280.78px;height:12px;line-height:12px;font-size:8.6px;color:#222;font-weight:normal;">mL</div>
<div class="a" style="left:997.9px;top:280.78px;height:12px;line-height:12px;font-size:8.6px;color:#222;font-weight:normal;">100</div>
<div class="a" style="left:354px;top:302.605px;width:10px;height:10px;background:transparent;border:1px solid #666;border-radius:1px"></div>
<div class="a" style="left:381.3px;top:302.11px;height:12px;line-height:12px;font-size:8.6px;color:#222;font-weight:normal;">亚砷酸根</div>
<div class="a" style="left:554.7px;top:302.11px;height:12px;line-height:12px;font-size:8.6px;color:#222;font-weight:normal;">LNBW241229</div>
<div class="a" style="left:636.7px;top:302.11px;height:12px;line-height:12px;font-size:8.6px;color:#222;font-weight:normal;">2</div>
<div class="a" style="left:713.7px;top:302.11px;height:12px;line-height:12px;font-size:8.6px;color:#222;font-weight:normal;">2</div>
<div class="a" style="left:922.8px;top:302.11px;height:12px;line-height:12px;font-size:8.6px;color:#222;font-weight:normal;">mL</div>
<div class="a" style="left:997.9px;top:302.11px;height:12px;line-height:12px;font-size:8.6px;color:#222;font-weight:normal;">100</div>
<div class="a" style="left:354px;top:323.935px;width:10px;height:10px;background:transparent;border:1px solid #666;border-radius:1px"></div>
<div class="a" style="left:381.3px;top:323.44px;height:12px;line-height:12px;font-size:8.6px;color:#222;font-weight:normal;">亚砷酸根</div>
<div class="a" style="left:554.7px;top:323.44px;height:12px;line-height:12px;font-size:8.6px;color:#222;font-weight:normal;">LNBW241230</div>
<div class="a" style="left:636.7px;top:323.44px;height:12px;line-height:12px;font-size:8.6px;color:#222;font-weight:normal;">2</div>
<div class="a" style="left:713.7px;top:323.44px;height:12px;line-height:12px;font-size:8.6px;color:#222;font-weight:normal;">2</div>
<div class="a" style="left:922.8px;top:323.44px;height:12px;line-height:12px;font-size:8.6px;color:#222;font-weight:normal;">mL</div>
<div class="a" style="left:997.9px;top:323.44px;height:12px;line-height:12px;font-size:8.6px;color:#222;font-weight:normal;">100</div>
<div class="a" style="left:354px;top:345.265px;width:10px;height:10px;background:transparent;border:1px solid #666;border-radius:1px"></div>
<div class="a" style="left:381.3px;top:343.87px;height:12px;line-height:12px;font-size:8.6px;color:#222;font-weight:normal;">婴儿配方乳粉中维生素B1、...</div>
<div class="a" style="left:554.7px;top:343.87px;height:12px;line-height:12px;font-size:8.6px;color:#222;font-weight:normal;">LNBW241228</div>
<div class="a" style="left:636.7px;top:343.87px;height:12px;line-height:12px;font-size:8.6px;color:#222;font-weight:normal;">40</div>
<div class="a" style="left:713.7px;top:343.87px;height:12px;line-height:12px;font-size:8.6px;color:#222;font-weight:normal;">40</div>
<div class="a" style="left:922.8px;top:343.87px;height:12px;line-height:12px;font-size:8.6px;color:#222;font-weight:normal;">g</div>
<div class="a" style="left:997.9px;top:343.87px;height:12px;line-height:12px;font-size:8.6px;color:#222;font-weight:normal;">5.09</div>
<div class="a" style="left:342px;top:357.5px;width:736px;height:0.8px;background:#e6e6e6"></div>
<div class="a" style="left:375.3px;top:81px;width:1px;height:276.5px;background:#e6e6e6"></div>
<div class="a" style="left:491.8px;top:81px;width:1px;height:276.5px;background:#e6e6e6"></div>
<div class="a" style="left:548.7px;top:81px;width:1px;height:276.5px;background:#e6e6e6"></div>
<div class="a" style="left:628.2px;top:81px;width:1px;height:276.5px;background:#e6e6e6"></div>
<div class="a" style="left:707.7px;top:81px;width:1px;height:276.5px;background:#e6e6e6"></div>
<div class="a" style="left:832.4px;top:81px;width:1px;height:276.5px;background:#e6e6e6"></div>
<div class="a" style="left:912.3px;top:81px;width:1px;height:276.5px;background:#e6e6e6"></div>
<div class="a" style="left:991.9px;top:81px;width:1px;height:276.5px;background:#e6e6e6"></div>
<div class="a" style="left:1071.5px;top:81px;width:1px;height:276.5px;background:#e6e6e6"></div>
<div class="a" style="left:342px;top:81px;width:1px;height:276.5px;background:#e6e6e6"></div>
<div class="a" style="left:375.3px;width:110.5px;text-align:center;top:89.00px;height:14px;line-height:14px;font-size:9.3px;color:#444;font-weight:normal;">存货名称</div>
<div class="a" style="left:381.3px;top:107px;width:104.5px;height:16px;background:#fff;border:1px solid #e3e3e3;border-radius:2px"></div>
<svg style="left:375.3px;top:81px" width="6" height="6" viewBox="0 0 6 6"><path d="M0 0 H6 L0 6Z" fill="#1d4fa0"/></svg>
<div class="a" style="left:491.8px;width:50.900000000000034px;text-align:center;top:89.00px;height:14px;line-height:14px;font-size:9.3px;color:#444;font-weight:normal;">菌株编号</div>
<div class="a" style="left:497.8px;top:107px;width:44.900000000000034px;height:16px;background:#fff;border:1px solid #e3e3e3;border-radius:2px"></div>
<svg style="left:491.8px;top:81px" width="6" height="6" viewBox="0 0 6 6"><path d="M0 0 H6 L0 6Z" fill="#1d4fa0"/></svg>
<div class="a" style="left:548.7px;width:73.5px;text-align:center;top:89.00px;height:14px;line-height:14px;font-size:9.3px;color:#444;font-weight:normal;">标准品编码</div>
<div class="a" style="left:554.7px;top:107px;width:67.5px;height:16px;background:#fff;border:1px solid #e3e3e3;border-radius:2px"></div>
<svg style="left:548.7px;top:81px" width="6" height="6" viewBox="0 0 6 6"><path d="M0 0 H6 L0 6Z" fill="#1d4fa0"/></svg>
<div class="a" style="left:628.2px;width:73.5px;text-align:center;top:89.00px;height:14px;line-height:14px;font-size:9.3px;color:#444;font-weight:normal;">标准品数量</div>
<div class="a" style="left:634.2px;top:107px;width:67.5px;height:16px;background:#fff;border:1px solid #e3e3e3;border-radius:2px"></div>
<svg style="left:628.2px;top:81px" width="6" height="6" viewBox="0 0 6 6"><path d="M0 0 H6 L0 6Z" fill="#1d4fa0"/></svg>
<div class="a" style="left:707.7px;width:118.69999999999993px;text-align:center;top:89.00px;height:14px;line-height:14px;font-size:9.3px;color:#444;font-weight:normal;">标准品剩余量</div>
<div class="a" style="left:713.7px;top:107px;width:112.69999999999993px;height:16px;background:#fff;border:1px solid #e3e3e3;border-radius:2px"></div>
<svg style="left:707.7px;top:81px" width="6" height="6" viewBox="0 0 6 6"><path d="M0 0 H6 L0 6Z" fill="#1d4fa0"/></svg>
<div class="a" style="left:832.4px;width:73.89999999999998px;text-align:center;top:89.00px;height:14px;line-height:14px;font-size:9.3px;color:#444;font-weight:normal;">代数</div>
<div class="a" style="left:838.4px;top:107px;width:67.89999999999998px;height:16px;background:#fff;border:1px solid #e3e3e3;border-radius:2px"></div>
<svg style="left:832.4px;top:81px" width="6" height="6" viewBox="0 0 6 6"><path d="M0 0 H6 L0 6Z" fill="#1d4fa0"/></svg>
<div class="a" style="left:912.3px;width:73.60000000000002px;text-align:center;top:89.00px;height:14px;line-height:14px;font-size:9.3px;color:#444;font-weight:normal;">单位</div>
<div class="a" style="left:918.3px;top:107px;width:67.60000000000002px;height:16px;background:#fff;border:1px solid #e3e3e3;border-radius:2px"></div>
<svg style="left:912.3px;top:81px" width="6" height="6" viewBox="0 0 6 6"><path d="M0 0 H6 L0 6Z" fill="#1d4fa0"/></svg>
<div class="a" style="left:991.9px;width:73.60000000000002px;text-align:center;top:89.00px;height:14px;line-height:14px;font-size:9.3px;color:#444;font-weight:normal;">浓度</div>
<div class="a" style="left:997.9px;top:107px;width:67.60000000000002px;height:16px;background:#fff;border:1px solid #e3e3e3;border-radius:2px"></div>
<svg style="left:991.9px;top:81px" width="6" height="6" viewBox="0 0 6 6"><path d="M0 0 H6 L0 6Z" fill="#1d4fa0"/></svg>
<svg style="left:1071.5px;top:81px" width="6" height="6" viewBox="0 0 6 6"><path d="M0 0 H6 L0 6Z" fill="#1d4fa0"/></svg>
<svg style="left:354.3px;top:88px" width="9" height="9" viewBox="0 0 9 9"><rect x="0.5" y="0.5" width="8" height="8" rx="0.6" fill="#fff" stroke="#555" stroke-width="0.95"/><rect x="2.1" y="2.1" width="4.8" height="4.8" fill="#1a3f96"/></svg>
<svg style="left:348px;top:106.8px" width="8" height="8" viewBox="0 0 8 8"><circle cx="4" cy="4" r="3.5" fill="none" stroke="#6aa4ec" stroke-width="1"/><path d="M2.5 2.5 L5.5 5.5 M5.5 2.5 L2.5 5.5" stroke="#6aa4ec" stroke-width="1"/></svg>
<svg style="left:361px;top:106.8px" width="9" height="8" viewBox="0 0 9 8"><path d="M2.2 2 A3.3 3.3 0 1 1 1.5 5" fill="none" stroke="#f2a080" stroke-width="0.9"/><path d="M0.8 0.6 L2.1 2.3 L4 1.5" fill="none" stroke="#f2a080" stroke-width="0.9"/></svg>
<div class="a" style="left:1071.5px;top:126.3px;width:6px;height:231px;background:#fff"></div>
<div class="a" style="left:1070px;top:127px;width:6.5px;height:24.5px;background:#a9b2bf;border-radius:3px"></div>
<svg style="left:618px;top:366px" width="5" height="8" viewBox="0 0 5 8"><path d="M4.5 0.5 L0.8 4 L4.5 7.5" stroke="#c8c8c8" fill="none" stroke-width="0.9"/></svg>
<div class="a" style="left:632px;top:362.3px;width:20px;height:15.4px;background:#fff;border:1px solid #e3e3e3;border-radius:2px"></div>
<div class="a" style="left:632px;width:20px;text-align:center;top:364.00px;height:12px;line-height:12px;font-size:8.5px;color:#333;font-weight:normal;">1</div>
<div class="a" style="left:660px;top:364.00px;height:12px;line-height:12px;font-size:8.5px;color:#444;font-weight:normal;">/ 52</div>
<svg style="left:686px;top:366px" width="5" height="8" viewBox="0 0 5 8"><path d="M0.5 0.5 L4.2 4 L0.5 7.5" stroke="#444" fill="none" stroke-width="0.9"/></svg>
<div class="a" style="left:701px;top:362.3px;width:59.4px;height:15.4px;background:#fff;border:1px solid #e3e3e3;border-radius:2px"></div>
<div class="a" style="left:707.8px;top:364.70px;height:12px;line-height:12px;font-size:8.3px;color:#444;font-weight:normal;">100条/页</div>
<svg style="left:750px;top:369px" width="4" height="3" viewBox="0 0 4 3"><path d="M0.3 0.3 L2 2.3 L3.7 0.3" stroke="#aaa" fill="none" stroke-width="0.7"/></svg>
<div class="a" style="left:765.6px;top:364.00px;height:12px;line-height:12px;font-size:8.5px;color:#444;font-weight:normal;">共 5136 条</div>
<div class="a" style="left:342px;top:387px;width:736px;height:145px;background:#fff;border:1px solid #e8e8e8"></div>
<div class="a" style="left:343px;top:388px;width:734px;height:18.5px;background:#ededed"></div>
<div class="a" style="left:352.5px;top:391.00px;height:14px;line-height:14px;font-size:9.3px;color:#444;font-weight:normal;">附件</div>
<div class="a" style="left:381.8px;top:388px;width:77.4px;height:18.5px;background:#2a55a6"></div>
<div class="a" style="left:381.8px;width:77.39999999999998px;text-align:center;top:391.00px;height:14px;line-height:14px;font-size:9.3px;color:#fff;font-weight:bold;">库存操作记录</div>
<div class="a" style="left:469.5px;top:391.00px;height:14px;line-height:14px;font-size:9.3px;color:#444;font-weight:normal;">质控标物成分</div>
<div class="a" style="left:546.5px;top:391.00px;height:14px;line-height:14px;font-size:9.3px;color:#444;font-weight:normal;">标准品成分</div>
<svg style="left:1062.4px;top:392.4px" width="10" height="10" viewBox="0 0 10 10"><circle cx="5" cy="5" r="4.3" fill="none" stroke="#333" stroke-width="0.95"/><path d="M3 5.8 L5 3.9 L7 5.8" fill="none" stroke="#333" stroke-width="0.95"/></svg>
<div class="a" style="left:1055.6px;top:415px;width:14.6px;height:15.2px;background:#fff;border:1px solid #e6e6e6;border-radius:2px"></div>
<svg style="left:1058.5px;top:418px" width="9" height="9" viewBox="0 0 9 9"><rect x="0.5" y="0.5" width="8" height="8" rx="0.5" fill="none" stroke="#444" stroke-width="0.9"/><path d="M0.5 1.8 H8.5" stroke="#444" stroke-width="1.6"/><path d="M2 4 H4.5 M2 6 H4" stroke="#444" stroke-width="0.8"/><circle cx="6.3" cy="6" r="1.2" fill="none" stroke="#444" stroke-width="0.9"/></svg>
<div class="a" style="left:342px;top:436.3px;width:728px;height:23.2px;background:#fff;border-top:1px solid #e6e6e6"></div>
<div class="a" style="left:342px;top:459.5px;width:728px;height:22px;background:linear-gradient(#e6e6e6,#f2f2f2 25%);border-bottom:1px solid #e3e3e3"></div>
<div class="a" style="left:376.3px;width:97.69999999999999px;text-align:center;top:442.00px;height:14px;line-height:14px;font-size:9.3px;color:#444;font-weight:normal;">操作名称</div>
<div class="a" style="left:478px;width:76px;text-align:center;top:442.00px;height:14px;line-height:14px;font-size:9.3px;color:#444;font-weight:normal;">操作数量</div>
<div class="a" style="left:558px;width:76.5px;text-align:center;top:442.00px;height:14px;line-height:14px;font-size:9.3px;color:#444;font-weight:normal;">操作人</div>
<div class="a" style="left:638.5px;width:75.10000000000002px;text-align:center;top:442.00px;height:14px;line-height:14px;font-size:9.3px;color:#444;font-weight:normal;">操作时间</div>
<div class="a" style="left:717.6px;width:58.19999999999993px;text-align:center;top:442.00px;height:14px;line-height:14px;font-size:9.3px;color:#444;font-weight:normal;">操作部门</div>
<div class="a" style="left:779.8px;width:286.20000000000005px;text-align:center;top:442.00px;height:14px;line-height:14px;font-size:9.3px;color:#444;font-weight:normal;">备注</div>
<div class="a" style="left:376.3px;top:436.3px;width:1px;height:45.2px;background:#e6e6e6"></div>
<div class="a" style="left:478px;top:436.3px;width:1px;height:45.2px;background:#e6e6e6"></div>
<div class="a" style="left:558px;top:436.3px;width:1px;height:45.2px;background:#e6e6e6"></div>
<div class="a" style="left:638.5px;top:436.3px;width:1px;height:45.2px;background:#e6e6e6"></div>
<div class="a" style="left:717.6px;top:436.3px;width:1px;height:45.2px;background:#e6e6e6"></div>
<div class="a" style="left:779.8px;top:436.3px;width:1px;height:45.2px;background:#e6e6e6"></div>
<div class="a" style="left:355px;top:443px;width:10px;height:10px;background:#fff;border:1px solid #666;border-radius:1px"></div>
<div class="a" style="left:355px;top:465.5px;width:10px;height:10px;background:transparent;border:1px solid #666;border-radius:1px"></div>
<div class="a" style="left:382px;top:464.50px;height:12px;line-height:12px;font-size:8px;color:#333;font-weight:normal;">手动入库</div>
<div class="a" style="left:563px;top:463px;width:30px;height:12px;background:linear-gradient(90deg,#c8c8c8,#a8a8a8 40%,#b8b8b8 70%,#e8e8e8)"></div>
<div class="a" style="left:643.5px;top:464.50px;height:12px;line-height:12px;font-size:8.8px;color:#333;font-weight:normal;">2024-06-24</div>
<div class="a" style="left:723px;top:464.50px;height:12px;line-height:12px;font-size:8px;color:#333;font-weight:normal;">质量保障部</div>
<div class="a" style="left:785px;top:464.50px;height:12px;line-height:12px;font-size:8px;color:#333;font-weight:normal;">入库标准品数量:1</div>
</div></body></html>
